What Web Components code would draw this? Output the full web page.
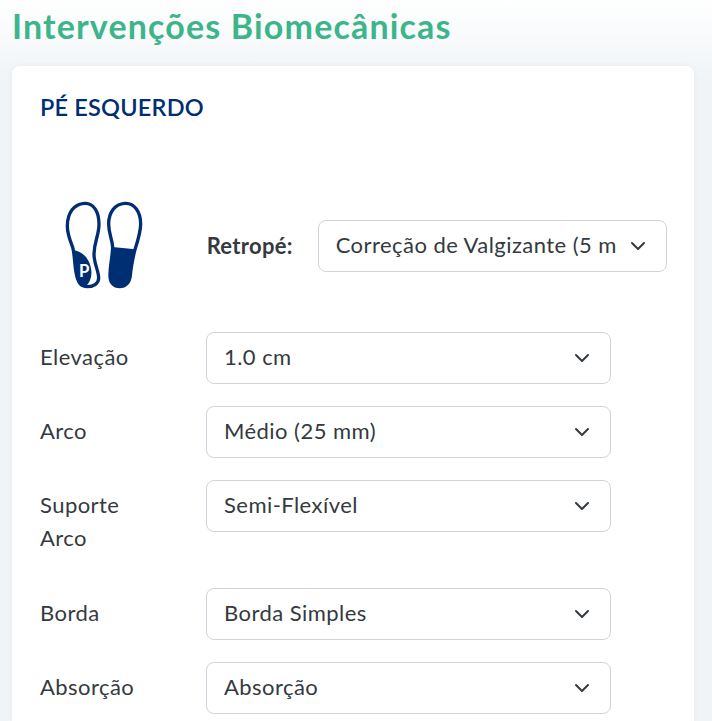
<!DOCTYPE html>
<html lang="pt"><head><meta charset="utf-8"><title>Intervenções</title>
<style>
html,body{margin:0;height:100%;overflow:hidden}
body{font-family:"Lato","Open Sans",sans-serif;background:linear-gradient(180deg,#fff 0,#f0f4f7 80px,#f0f4f7 100%)}
</style></head><body>
<bio-page>
  <span slot="title">Intervenções Biomecânicas</span>
  <foot-card heading="PÉ ESQUERDO">
    <hind-row label="Retropé:" value="Correção de Valgizante (5 mm)"></hind-row>
    <field-row label="Elevação" value="1.0 cm"></field-row>
    <field-row label="Arco" value="Médio (25 mm)"></field-row>
    <field-row label="Suporte Arco" value="Semi-Flexível" style="margin-bottom:24px"></field-row>
    <field-row label="Borda" value="Borda Simples"></field-row>
    <field-row label="Absorção" value="Absorção" style="margin-bottom:0"></field-row>
  </foot-card>
</bio-page>
<script>
function el(name,html,attrs){
  customElements.define(name,class extends HTMLElement{
    connectedCallback(){
      if(this.shadowRoot)return;
      const r=this.attachShadow({mode:'open'});
      let h=html;
      (attrs||[]).forEach(a=>{h=h.split('{{'+a+'}}').join(this.getAttribute(a)||'')});
      r.innerHTML=h;
    }
  });
}
el('bio-page',`<style>
:host{display:block;padding:0 18px 0 12px}
h1{margin:0;padding-top:5px;height:66px;box-sizing:border-box;font-size:34px;line-height:42px;font-weight:700;color:#3cb58b;white-space:nowrap;letter-spacing:1.15px}
</style><h1><slot name="title"></slot></h1><slot></slot>`);
el('foot-card',`<style>
:host{display:block;background:#fff;border-radius:8px 8px 0 0;padding:26px 28px 7px;box-shadow:0 0 6px rgba(0,30,60,.04)}
h2{margin:0 0 78px;font-size:23.5px;line-height:30px;font-weight:600;color:#002e73;letter-spacing:.2px}
</style><h2>{{heading}}</h2><slot></slot>`,['heading']);
el('select-box',`<style>
:host{display:flex;align-items:center;box-sizing:border-box;height:52px;background:#fff;border:1px solid #cfd4dc;border-radius:8px;padding:0 20px 0 17px;color:#333a40;font-size:22px;letter-spacing:.45px}
span{flex:1;min-width:0;overflow:hidden;white-space:nowrap;padding-bottom:3px}
svg{flex:none;margin-left:14px;width:16px;height:16px}
</style><span><slot></slot></span><svg viewBox="0 0 16 16" fill="none" stroke="#343a40" stroke-width="2" stroke-linecap="round" stroke-linejoin="round"><path d="M2 5l6 6 6-6"/></svg>`);
el('field-row',`<style>
:host{display:grid;grid-template-columns:166px 405px;margin-bottom:22px;align-items:start}
.l{padding:8px 60px 10px 0;font-size:22px;line-height:33px;color:#343a40;letter-spacing:.45px}
</style><div class="l">{{label}}</div><select-box>{{value}}</select-box>`,['label','value']);
el('hind-row',`<style>
:host{display:flex;align-items:center;margin:0 0 40px;height:92px}
svg{flex:none;width:86.67px;height:93.33px;margin:0 59px 0 20px}
b{flex:none;width:87px;font-size:22px;font-weight:700;color:#343a40;margin-right:24px;margin-left:1px;letter-spacing:.3px;white-space:nowrap;padding-bottom:2px}
select-box{width:349px}
</style>
<svg viewBox="90 60 260 280">
<g fill="none" stroke="#002e73" stroke-width="10">
<path d="M163 73C192 71 207 100 207 135C207 170 193 185 192 225C192 255 206 275 206 297C206 313 192 323 172 323C152 323 144 310 139 285C133 255 134 225 128 205C120 185 112 165 112 142C112 100 133 75 163 73Z"/>
<path d="M284 73C314 71 332 100 332 135C332 160 322 190 314 215C307 245 303 265 301 290C299 310 287 323 269 323C251 323 240 310 240 290C240 260 247 235 248 205C247 180 236 165 236 135C236 100 255 75 284 73Z"/>
</g>
<path fill="#002e73" d="M128 212C160 218 180 240 184 275C186 295 180 310 168 322C150 325 142 305 138 280C133 250 135 225 128 212Z"/>
<path fill="#002e73" d="M247 204L316 211C307 245 303 265 301 290C299 310 287 323 269 323C251 323 240 310 240 290C240 260 245 235 247 204Z"/>
<text x="147" y="294" font-family="Lato,sans-serif" font-weight="700" font-size="50" fill="#fff">P</text>
</svg><b>{{label}}</b><select-box>{{value}}</select-box>`,['label','value']);
</script>
</body></html>
